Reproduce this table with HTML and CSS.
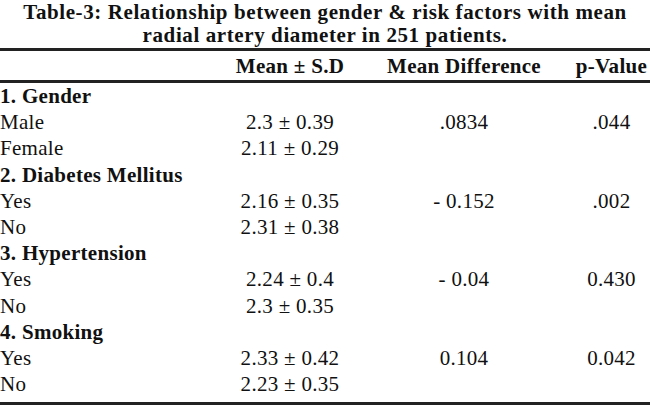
FILE: index.html
```html
<!DOCTYPE html>
<html>
<head>
<meta charset="utf-8">
<link rel="stylesheet" href="styles.css">
</head>
<body>
<div class="caption">Table-3: Relationship between gender &amp; risk factors with mean<br>radial artery diameter in 251 patients.</div>
<table class="data">
  <colgroup>
    <col class="c1"><col class="c2"><col class="c3"><col class="c4">
  </colgroup>
  <thead>
    <tr><th></th><th>Mean ± S.D</th><th>Mean Difference</th><th>p-Value</th></tr>
  </thead>
  <tbody>
    <tr class="grp"><td>1. Gender</td><td></td><td></td><td></td></tr>
    <tr><td>Male</td><td>2.3 ± 0.39</td><td>.0834</td><td>.044</td></tr>
    <tr><td>Female</td><td>2.11 ± 0.29</td><td></td><td></td></tr>
    <tr class="grp"><td>2. Diabetes Mellitus</td><td></td><td></td><td></td></tr>
    <tr><td>Yes</td><td>2.16 ± 0.35</td><td>- 0.152</td><td>.002</td></tr>
    <tr><td>No</td><td>2.31 ± 0.38</td><td></td><td></td></tr>
    <tr class="grp"><td>3. Hypertension</td><td></td><td></td><td></td></tr>
    <tr><td>Yes</td><td>2.24 ± 0.4</td><td>- 0.04</td><td>0.430</td></tr>
    <tr><td>No</td><td>2.3 ± 0.35</td><td></td><td></td></tr>
    <tr class="grp"><td>4. Smoking</td><td></td><td></td><td></td></tr>
    <tr><td>Yes</td><td>2.33 ± 0.42</td><td>0.104</td><td>0.042</td></tr>
    <tr class="last"><td>No</td><td>2.23 ± 0.35</td><td></td><td></td></tr>
  </tbody>
</table>
</body>
</html>
```
FILE: styles.css
```css
html, body {
  margin: 0;
  padding: 0;
  background: #ffffff;
}
body {
  width: 650px;
  font-family: "Liberation Serif", "Times New Roman", serif;
  color: #111111;
}
.caption {
  padding-top: 1px;
  font-size: 21px;
  line-height: 23px;
  font-weight: bold;
  letter-spacing: 0.6px;
  text-align: center;
  height: 47px;
}
.data {
  width: 650px;
  border-collapse: collapse;
  table-layout: fixed;
  border-top: 3px solid #222222;
  border-bottom: 3px solid #222222;
  font-family: "Liberation Serif", "Times New Roman", serif;
  font-size: 21px;
  letter-spacing: 0.3px;
}
.c1 { width: 225px; }
.c2 { width: 130px; }
.c3 { width: 218px; }
.c4 { width: 77px; }
.data th {
  height: 29px;
  padding: 0;
  font-weight: bold;
  text-align: center;
  vertical-align: middle;
  white-space: nowrap;
  line-height: 24px;
  border-bottom: 3px solid #222222;
}
.data td {
  height: 26.2px;
  padding: 0;
  line-height: 24px;
  text-align: center;
  vertical-align: middle;
  white-space: nowrap;
}
.data .last td {
  padding-bottom: 5px;
}
.data td:first-child {
  text-align: left;
}
.data .grp td {
  font-weight: bold;
}
```
